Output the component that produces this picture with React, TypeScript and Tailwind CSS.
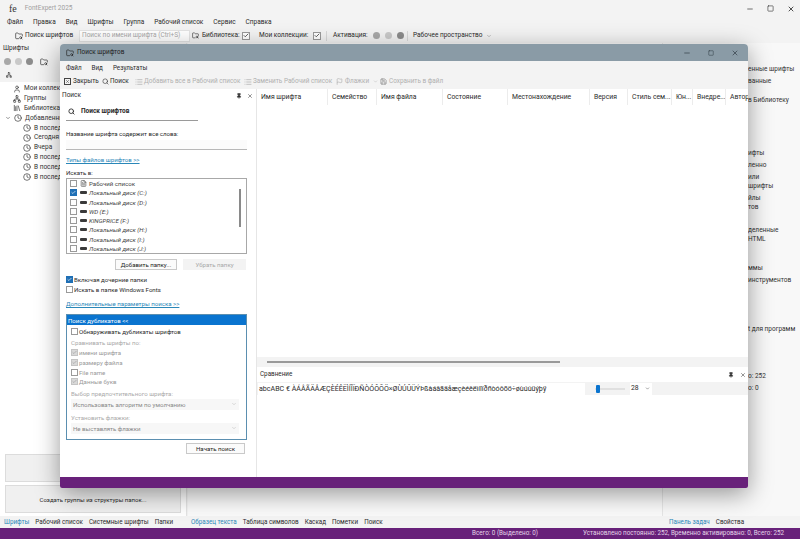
import React from "react";
import { Search, X, Minus, Square, Pin, Check, ChevronDown, Clock, Save, Flag, FileText, User, Network, Library, List, FolderSearch } from "lucide-react";

const Cb = ({ on, blue, dis, size = "w-[7px] h-[7px]" }: { on?: boolean; blue?: boolean; dis?: boolean; size?: string }) => (
  <span className={`shrink-0 flex items-center justify-center border ${size} ${blue ? "bg-[#1f6fb5] border-[#1f6fb5]" : dis ? "bg-[#d9d9d9] border-[#c4c4c4]" : "bg-white border-[#9a9a9a]"}`}>
    {on && <Check className={blue ? "text-white" : dis ? "text-[#9a9a9a]" : "text-[#333]"} size={7} strokeWidth={3} />}
  </span>
);

const Dot = ({ c }: { c: string }) => <span className={`w-[7px] h-[7px] rounded-full shrink-0 ${c}`} />;

const Tree = ({ icon, label, pl = "pl-[13px]" }: { icon: React.ReactNode; label: string; pl?: string }) => (
  <div className={`h-[9.8px] flex items-center gap-[3px] ${pl} whitespace-nowrap`}>{icon}<span>{label}</span></div>
);

const Btn = ({ w, label, dis }: { w: string; label: string; dis?: boolean }) => (
  <div className={`${w} h-[11px] flex items-center justify-center ${dis ? "bg-[#f3f3f3] text-[#a8a8a8]" : "bg-[#fbfbfb] border border-[#c9c9c9] text-[#222]"}`}>{label}</div>
);

const Drive = () => <span className="w-[7px] h-[3px] bg-[#3a3a3a] shrink-0 rounded-[1px]" />;

const listRows = ["Локальный диск (C:)", "Локальный диск (D:)", "WD (E:)", "KINGPRICE (F:)", "Локальный диск (H:)", "Локальный диск (I:)", "Локальный диск (J:)"];

const cols: [string, string][] = [
  ["w-[71px]", "Имя шрифта"], ["w-[49px]", "Семейство"], ["w-[66px]", "Имя файла"], ["w-[65px]", "Состояние"],
  ["w-[82px]", "Местонахождение"], ["w-[38px]", "Версия"], ["w-[44px]", "Стиль сем..."], ["w-[21px]", "Юн..."],
  ["w-[33px]", "Внедре..."], ["w-[23px]", "Автор"],
];

const rightLines: [string, string][] = [
  ["mt-[22px]", "енные шрифты"], ["mt-[3px]", "ванные"], ["mt-[10px]", "в Библиотеку"], ["mt-[44px]", "ифты"],
  ["mt-[3px]", "ленно"], ["mt-[3px]", "или"], ["mt-[0px]", "шрифты"], ["mt-[3px]", "йлы"], ["mt-[0px]", "тов"],
  ["mt-[14px]", "деленные"], ["mt-[0px]", "HTML"], ["mt-[20px]", "ммы"], ["mt-[3px]", "инструментов"],
  ["mt-[40px]", "t для программ"], ["mt-[38px]", "о: 252"], ["mt-[3px]", "о: 0"],
];

export default function App() {
  return (
    <div className="relative w-[800px] h-[539px] overflow-hidden bg-[#f3f3f3] text-[#2b2b2b] text-[6.5px] leading-[9px] font-['Roboto','Liberation_Sans',sans-serif] flex flex-col">
      {/* title */}
      <div className="h-[16px] flex items-center shrink-0 pt-[1px]">
        <span className="ml-[9px] text-[10px] font-['Liberation_Serif',serif] text-[#333]">fe</span>
        <span className="ml-[8px] text-[#a0a0a0]">FontExpert 2025</span>
        <div className="ml-auto flex items-center gap-[13px] pr-[5px]">
          <Minus size={8} strokeWidth={2} />
          <Square size={7} strokeWidth={2} />
          <X size={8} strokeWidth={2.5} />
        </div>
      </div>
      {/* menu */}
      <div className="h-[12px] flex items-center pl-[7px] gap-[10px] shrink-0 whitespace-nowrap">
        {["Файл", "Правка", "Вид", "Шрифты", "Группа", "Рабочий список", "Сервис", "Справка"].map((m) => <span key={m}>{m}</span>)}
      </div>
      {/* toolbar */}
      <div className="h-[15px] flex items-center shrink-0 pl-[15px] whitespace-nowrap">
        <FolderSearch size={8} className="shrink-0" />
        <span className="ml-[2px] w-[52px]">Поиск шрифтов</span>
        <div className="ml-[2px] w-[111px] h-[12px] bg-white border border-[#e4e4e4] flex items-center pl-[2px] text-[#a8a8a8]">Поиск по имени шрифта (Ctrl+S)</div>
        <FolderSearch size={7} className="ml-[2px] shrink-0" />
        <span className="ml-[3px] w-[40px]">Библиотека:</span>
        <Cb on size="w-[8px] h-[8px]" />
        <span className="ml-[9px] w-[54px]">Мои коллекции:</span>
        <Cb on size="w-[8px] h-[8px]" />
        <span className="ml-[5px] w-px h-[10px] bg-[#d8d8d8]" />
        <span className="ml-[6px] w-[37px]">Активация:</span>
        <div className="flex gap-[5px] ml-[3px]"><Dot c="bg-[#a8a8a8]" /><Dot c="bg-[#c9c9c9]" /><Dot c="bg-[#8c8c8c]" /></div>
        <span className="ml-[3px] w-px h-[10px] bg-[#d8d8d8]" />
        <span className="ml-[5px]">Рабочее пространство</span>
        <ChevronDown size={6} className="ml-[4px] text-[#888]" />
      </div>
      {/* body */}
      <div className="flex-1 flex min-h-0">
        {/* left */}
        <div className="w-[187px] shrink-0 flex flex-col border-r border-[#e4e4e4]">
          <div className="h-[10px] pl-[3px] flex items-center shrink-0">Шрифты</div>
          <div className="h-[13px] flex items-center pl-[4px] gap-[4px] mt-[2px] shrink-0"><Dot c="bg-[#a8a8a8]" /><Dot c="bg-[#c9c9c9]" /><Dot c="bg-[#8c8c8c]" /><FolderSearch size={8} className="ml-[3px]" /></div>
          <div className="h-[14px] flex items-center pl-[6px] shrink-0"><Network size={6} /></div>
          <div className="flex-1 bg-white pt-[2px] text-[#333]">
            <Tree icon={<User size={8} />} label="Мои коллекции" />
            <Tree icon={<Network size={8} />} label="Группы" />
            <Tree icon={<Library size={8} />} label="Библиотека" />
            <Tree pl="pl-[5px]" icon={<><ChevronDown size={6} /><Clock size={8} /></>} label="Добавленные" />
            {["В последний час", "Сегодня", "Вчера", "В последние 7 дней", "В последние 30 дней", "В последние 90 дней"].map((t) => (
              <Tree key={t} pl="pl-[23px]" icon={<Clock size={8} />} label={t} />
            ))}
          </div>
          <div className="bg-white px-[5px] pb-[3px] flex flex-col gap-[3px] shrink-0 text-[6px]">
            <div className="h-[28px] bg-[#f0f0f0] border border-[#dcdcdc] flex items-center justify-center">Добавить группу...</div>
            <div className="h-[28px] bg-[#f0f0f0] border border-[#dcdcdc] flex items-center justify-center">Создать группы из структуры папок...</div>
          </div>
        </div>
        {/* center */}
        <div className="flex-1 bg-[#fafafa] ml-[1px]" />
        {/* right */}
        <div className="w-[138px] shrink-0 bg-[#f8f8f8] border-l border-[#e6e6e6] pl-[85px] whitespace-nowrap text-[#333] flex flex-col">
          {rightLines.map(([m, t], i) => <div key={i} className={m}>{t}</div>)}
        </div>
      </div>
      {/* tabs */}
      <div className="h-[12px] flex items-center shrink-0 whitespace-nowrap text-[6.3px]">
        <div className="w-[189px] flex gap-[6px] pl-[4px]"><span className="text-[#2a87b8]">Шрифты</span><span>Рабочий список</span><span>Системные шрифты</span><span>Папки</span></div>
        <div className="w-[473px] flex gap-[6px] pl-[2px]"><span className="text-[#2a87b8]">Образец текста</span><span>Таблица символов</span><span>Каскад</span><span>Пометки</span><span>Поиск</span></div>
        <div className="flex gap-[6px] pl-[7px]"><span className="text-[#2a87b8]">Панель задач</span><span>Свойства</span></div>
      </div>
      {/* status */}
      <div className="h-[11px] bg-[#68217a] text-[#e4d5e8] flex items-center shrink-0 whitespace-nowrap text-[6.3px]">
        <span className="ml-[472px]">Всего: 0 (Выделено: 0)</span>
        <span className="ml-[45px]">Установлено постоянно: 252, Временно активировано: 0, Всего: 252</span>
      </div>

      {/* floating window */}
      <div className="absolute left-[60px] top-[44px] w-[688px] h-[444px] flex flex-col bg-white rounded-t-[4px] rounded-b-[2px] overflow-hidden shadow-[0_6px_24px_rgba(0,0,0,0.4)]">
        <div className="h-[17px] bg-[#8a9ba6] flex items-center shrink-0 pl-[6px] text-[#222] text-[6.4px]">
          <FolderSearch size={8} />
          <span className="ml-[3px]">Поиск шрифтов</span>
          <div className="ml-auto flex items-center gap-[17px] pr-[9px] text-[#2f3a42]">
            <Minus size={8} />
            <Square size={6} strokeWidth={2} />
            <X size={8} />
          </div>
        </div>
        <div className="h-[13px] bg-[#f3f3f3] flex items-center pl-[6px] gap-[10px] shrink-0 pt-[1px] text-[6.3px]"><span>Файл</span><span>Вид</span><span>Результаты</span></div>
        <div className="h-[15px] bg-[#f3f3f3] flex items-center pl-[4px] shrink-0 whitespace-nowrap text-[6.4px]">
          <X size={7} className="border border-[#444] shrink-0" />
          <span className="ml-[2px] w-[26px]">Закрыть</span>
          <Search size={7} className="ml-[3px] shrink-0" />
          <span className="ml-[1px] w-[22px]">Поиск</span>
          <List size={8} className="ml-[3px] shrink-0 text-[#a8a8a8]" />
          <span className="ml-[1px] w-[100px] text-[#b0b0b0]">Добавить все в Рабочий список</span>
          <List size={8} className="shrink-0 text-[#a8a8a8]" />
          <span className="ml-[1px] w-[83px] text-[#b0b0b0]">Заменить Рабочий список</span>
          <Flag size={7} className="shrink-0 text-[#a8a8a8]" />
          <span className="ml-[2px] w-[24px] text-[#b0b0b0]">Флажки</span>
          <ChevronDown size={5} className="ml-[4px] text-[#b0b0b0]" />
          <Save size={7} className="ml-[2px] text-[#777]" />
          <span className="ml-[2px] text-[#b0b0b0]">Сохранить в файл</span>
        </div>
        <div className="flex-1 flex min-h-0">
          {/* search panel */}
          <div className="w-[197px] shrink-0 border-r border-[#e6e6e6] flex flex-col px-[6px] relative text-[6.1px]">
            <div className="h-[13px] -mx-[4px] flex items-center shrink-0 text-[6.5px]">
              <span>Поиск</span>
              <Pin size={6} className="ml-auto text-[#333] fill-[#333]" />
              <X size={6} className="ml-[5px] mr-[1px]" />
            </div>
            <div className="h-[18px] w-[132px] border-b border-[#9a9a9a] flex items-center pl-[2px] gap-[6px] font-bold shrink-0 mt-[1px] pb-[1px] text-[6.5px]">
              <Search size={7} strokeWidth={3} /><span>Поиск шрифтов</span>
            </div>
            <div className="mt-[8px] h-[9px] shrink-0">Название шрифта содержит все слова:</div>
            <div className="mt-[2px] h-[10px] w-[181px] border-b border-[#b8b8b8] bg-[#fbfbfb] shrink-0" />
            <div className="mt-[5px] h-[9px] text-[#2a87b8] underline shrink-0">Типы файлов шрифтов &gt;&gt;</div>
            <div className="mt-[4px] h-[9px] shrink-0">Искать в:</div>
            <div className="mt-[1px] w-[181px] h-[76px] border border-[#a8a8a8] shrink-0 flex overflow-hidden pl-[3px]">
              <div className="flex-1 flex flex-col italic text-[#444]">
                <div className="h-[9.3px] flex items-center gap-[2.5px] not-italic"><Cb /><FileText size={7} /><span>Рабочий список</span></div>
                {listRows.map((r, i) => (
                  <div key={r} className="h-[9.3px] flex items-center gap-[2.5px] whitespace-nowrap"><Cb on={i === 0} blue={i === 0} /><Drive /><span>{r}</span></div>
                ))}
              </div>
              <div className="w-[2px] h-[38px] bg-[#8a8a8a] mt-[10px] mr-[5px]" />
            </div>
            <div className="mt-[5px] flex justify-end gap-[6px] pr-[4px] shrink-0">
              <Btn w="w-[62px]" label="Добавить папку..." />
              <Btn w="w-[63px]" dis label="Убрать папку" />
            </div>
            <div className="mt-[5px] h-[9.5px] flex items-center gap-[1px] shrink-0"><Cb on blue /><span>Включая дочерние папки</span></div>
            <div className="h-[9.5px] flex items-center gap-[1px] shrink-0"><Cb /><span>Искать в папке Windows Fonts</span></div>
            <div className="mt-[5px] h-[9px] text-[#2a87b8] underline shrink-0">Дополнительные параметры поиска &gt;&gt;</div>
            <div className="mt-[6px] w-[181px] h-[126px] border border-[#5b8fb0] shrink-0 flex flex-col">
              <div className="h-[10px] bg-[#0a74cf] text-white pl-[1px] flex items-center shrink-0">Поиск дубликатов &lt;&lt;</div>
              <div className="pl-[4px] mt-[2px] h-[9px] flex items-center gap-[1px]"><Cb /><span>Обнаруживать дубликаты шрифтов</span></div>
              <div className="pl-[4px] mt-[2px] h-[9px] text-[#aaa]">Сравнивать шрифты по:</div>
              <div className="text-[#999]">
                {[["имени шрифта", true], ["размеру файла", true], ["File name", false], ["Данные букв", true]].map(([t, on]) => (
                  <div key={t as string} className="pl-[4px] h-[9.7px] flex items-center gap-[1px] first:mt-[1px]"><Cb on={on as boolean} dis={on as boolean} /><span>{t as string}</span></div>
                ))}
              </div>
              <div className="pl-[4px] mt-[2px] h-[9px] text-[#aaa]">Выбор предпочтительного шрифта:</div>
              <div className="ml-[4px] mr-[7px] mt-[1px] h-[11px] bg-[#f7f7f7] text-[#888] flex items-center pl-[2px] pr-[2px]">Использовать алгоритм по умолчанию<ChevronDown size={6} className="ml-auto text-[#bbb]" /></div>
              <div className="pl-[4px] mt-[3px] h-[9px] text-[#aaa]">Установить флажки:</div>
              <div className="ml-[4px] mr-[7px] mt-[1px] h-[11px] bg-[#f7f7f7] text-[#888] flex items-center pl-[2px] pr-[2px]">Не выставлять флажки<ChevronDown size={6} className="ml-auto text-[#bbb]" /></div>
            </div>
            <div className="mt-[3px] flex justify-end pr-[5px] shrink-0"><Btn w="w-[59px]" label="Начать поиск" /></div>
          </div>
          {/* results */}
          <div className="flex-1 flex flex-col min-w-0 text-[6.8px]">
            <div className="h-[16px] flex items-center shrink-0 whitespace-nowrap">
              {cols.map(([w, t]) => (
                <div key={t} className={`${w} h-full shrink-0 flex items-center pl-[4px] border-r border-[#ececec] overflow-hidden`}>{t}</div>
              ))}
            </div>
            <div className="flex-1" />
            <div className="h-[10px] bg-[#f3f3f3] flex items-center pl-[10px] shrink-0">
              <div className="w-[293px] h-[2px] bg-[#9a9a9a]" />
            </div>
            <div className="h-[15px] flex items-center pl-[3px] shrink-0 text-[6.3px]">
              <span>Сравнение</span>
              <Pin size={6} className="ml-auto text-[#333] fill-[#333]" />
              <X size={6} className="ml-[6px] mr-[2px]" />
            </div>
            <div className="h-[13px] bg-[#f3f3f3] flex items-center pl-[1px] shrink-0 whitespace-nowrap">
              <div className="w-[327px] h-[12px] bg-white flex items-center pl-[1px] overflow-hidden text-[7.1px]">abcABC € ÀÁÂÃÄÅÆÇÈÉÊËÌÍÎÏÐÑÒÓÔÕÖ×ØÙÚÛÜÝÞßàáâãäåæçèéêëìíîïðñòóôõö÷øùúûüýþÿ</div>
              <div className="ml-[10px] w-[30px] h-[2px] bg-[#e0e0e0] relative"><span className="absolute left-[1px] -top-[3px] w-[4px] h-[8px] bg-[#0a74cf] rounded-[1px]" /></div>
              <div className="ml-[5px] w-[22px] h-[12px] bg-white flex items-center pl-[1px]">28<ChevronDown size={5} className="ml-auto mr-[2px]" /></div>
            </div>
            <div className="h-[82px] shrink-0" />
          </div>
        </div>
        <div className="h-[11px] bg-[#68217a] shrink-0" />
      </div>
    </div>
  );
}
